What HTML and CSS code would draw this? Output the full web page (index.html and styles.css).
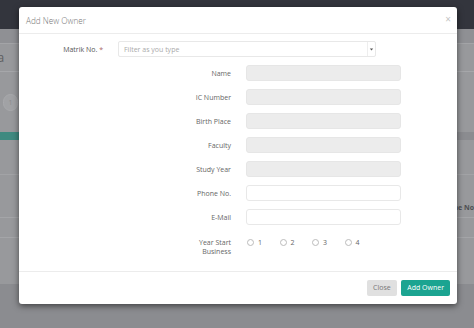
FILE: index.html
```html
<!DOCTYPE html>
<html>
<head>
<meta charset="utf-8">
<link rel="stylesheet" href="styles.css">
</head>
<body>
<div class="page">
  <div class="topbar"></div>
  <div class="subbar"></div>
  <div class="titlebar"><span class="page-title">Owner Data</span></div>
  <div class="pager"><span class="page-dot">1</span></div>
  <div class="teal-bar"></div>
  <div class="table">
    <div class="trow tall"></div>
    <div class="trow head"><span class="th">Phone No..</span></div>
    <div class="trow"></div>
    <div class="trow last"></div>
  </div>
  <div class="footer-area"></div>
</div>

<div class="modal">
  <div class="modal-header">
    <span class="modal-title">Add New Owner</span>
    <span class="modal-close">×</span>
  </div>
  <div class="modal-body">
    <div class="row matrik">
      <label class="lbl lbl-wide">Matrik No. <span class="req">*</span></label>
      <div class="select">
        <span class="placeholder">Filter as you type</span>
        <span class="caret"><svg width="5" height="5" viewBox="0 0 5 5"><path d="M0.8 1.5 L4.2 1.5 L2.5 3.6 Z" fill="#555"/></svg></span>
      </div>
    </div>
    <div class="row"><label class="lbl">Name</label><div class="input disabled"></div></div>
    <div class="row"><label class="lbl">IC Number</label><div class="input disabled"></div></div>
    <div class="row"><label class="lbl">Birth Place</label><div class="input disabled"></div></div>
    <div class="row"><label class="lbl">Faculty</label><div class="input disabled"></div></div>
    <div class="row"><label class="lbl">Study Year</label><div class="input disabled"></div></div>
    <div class="row"><label class="lbl">Phone No.</label><div class="input"></div></div>
    <div class="row"><label class="lbl">E-Mail</label><div class="input"></div></div>
    <div class="row year">
      <label class="lbl">Year Start<br>Business</label>
      <div class="radios">
        <span class="radio"><span class="circle"></span>1</span>
        <span class="radio"><span class="circle"></span>2</span>
        <span class="radio"><span class="circle"></span>3</span>
        <span class="radio"><span class="circle"></span>4</span>
      </div>
    </div>
  </div>
  <div class="modal-footer">
    <button class="btn btn-close">Close</button>
    <button class="btn btn-primary">Add Owner</button>
  </div>
</div>
</body>
</html>
```

FILE: styles.css
```css
* { box-sizing: border-box; }
html, body { margin: 0; padding: 0; }
body {
  width: 474px;
  height: 328px;
  overflow: hidden;
  font-family: "Open Sans", "Liberation Sans", sans-serif;
  background: #8b8c90;
  position: relative;
}

/* dimmed page behind the modal */
.page { width: 474px; }
.topbar { height: 29px; background: #33353d; }
.subbar { height: 15px; background: #8f9094; border-bottom: 1px solid #a3a4a7; }
.titlebar {
  height: 28px;
  background: #98999c;
  border-bottom: 1px solid #a6a7aa;
  display: flex;
  align-items: center;
  overflow: hidden;
}
.page-title { font-size: 12px; color: #5d5e61; margin-left: -63px; white-space: nowrap; }
.pager { height: 60px; background: #98999c; display: flex; align-items: center; padding-left: 3px; }
.page-dot {
  width: 15px; height: 17px; border-radius: 8px;
  background: #a1a2a5; border: 1px solid #a8a9ac;
  font-size: 7px; color: #8a8b8e;
  display: flex; align-items: center; justify-content: center;
}
.teal-bar { height: 8px; background: #3f8a80; width: 440px; }
.table { background: #98999c; }
.trow { height: 20px; border-bottom: 1px solid #a4a5a8; }
.trow.tall { height: 35px; border-bottom: 1px solid #a2a3a6; }
.trow.head { height: 43px; display: flex; align-items: flex-end; justify-content: flex-end; padding-bottom: 5px; }
.trow.last { height: 46px; border-bottom: none; }
.th { font-size: 7px; font-weight: bold; color: #4e4f52; margin-right: -4px; white-space: nowrap; }
.footer-area { height: 60px; background: #8b8c90; }

/* modal */
.modal {
  position: absolute;
  left: 19px;
  top: 7px;
  width: 438px;
  background: #fff;
  border-radius: 3px;
  box-shadow: 0 2px 6px rgba(0, 0, 0, 0.55);
}
.modal-header {
  height: 27px;
  padding: 0 7px;
  border-bottom: 1px solid #ececec;
  display: flex;
  align-items: center;
  justify-content: space-between;
}
.modal-title { font-size: 8.2px; font-weight: 300; color: #777; }
.modal-close { font-size: 10px; color: #c4c4c4; margin-top: -2px; margin-right: -1px; }

.modal-body { padding: 7px 0 15px; }
.row {
  display: flex;
  align-items: center;
  height: 16px;
  margin-bottom: 8px;
}
.lbl {
  width: 212px;
  margin-right: 15px;
  text-align: right;
  font-size: 7px;
  color: #666;
  line-height: 9px;
}
.lbl-wide { width: 84px; color: #555; }
.req { color: #a66; }

.select {
  width: 258px;
  height: 16px;
  border: 1px solid #e8e8e8;
  border-radius: 2px;
  display: flex;
  align-items: center;
  justify-content: space-between;
}
.placeholder { font-size: 7px; color: #aaa; padding-left: 5px; }
.caret {
  width: 8px;
  height: 14px;
  border-left: 1px solid #eee;
  display: flex;
  align-items: center;
  justify-content: center;
}
.input {
  width: 155px;
  height: 16px;
  border: 1px solid #e8e8e8;
  border-radius: 3px;
  background: #fff;
}
.input.disabled { background: #ececec; border-color: #e6e6e6; }

.row.year {
  height: 18px;
  margin-top: 13px;
  margin-bottom: 0;
  align-items: flex-start;
}
.radios { display: flex; margin-left: 1px; }
.radio {
  width: 32.5px;
  display: inline-flex;
  align-items: center;
  font-size: 7px;
  line-height: 9px;
  color: #666;
}
.circle {
  width: 7px;
  height: 7px;
  border: 1px solid #bbb;
  border-radius: 50%;
  margin-right: 4px;
  background: #fff;
}

.modal-footer {
  border-top: 1px solid #ececec;
  padding: 8px 7px 8px;
  display: flex;
  justify-content: flex-end;
  gap: 4px;
}
.btn {
  height: 16px;
  padding: 0 6.5px;
  border: none;
  border-radius: 2px;
  font-family: "Open Sans", "Liberation Sans", sans-serif;
  font-size: 7px;
  line-height: 16px;
}
.btn-close { background: #e0e0e0; color: #777; }
.btn-primary { background: #1ba491; color: #fff; padding: 0 6px; }
```
